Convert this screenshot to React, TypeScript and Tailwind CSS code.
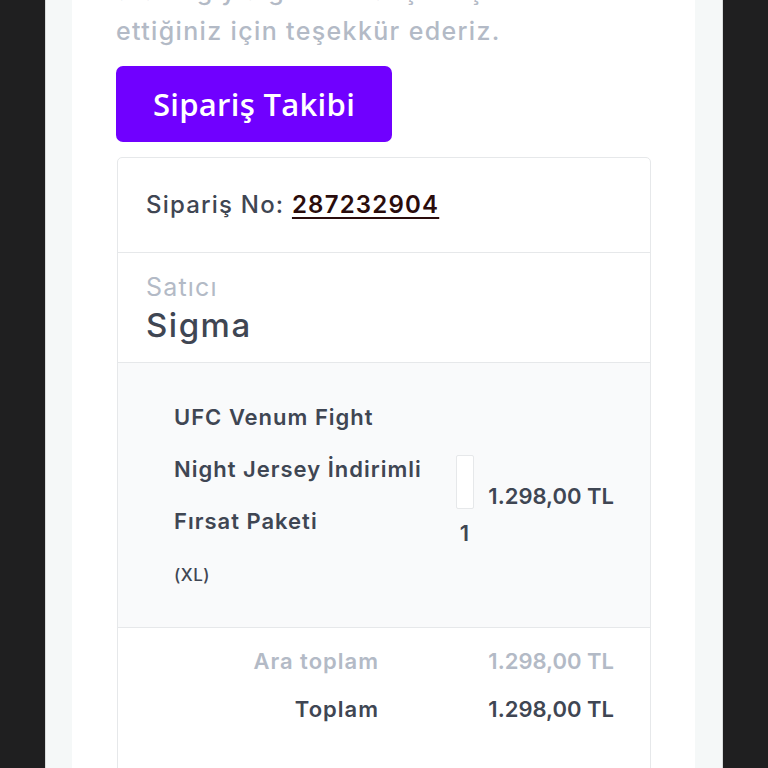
export default function App() {
  return (
    <div className="min-h-[768px] w-full overflow-hidden bg-[#1f1f20] font-['Inter',sans-serif]">
      <div className="mx-auto min-h-[768px] w-[678px] border-x border-[#d9dcdc] bg-[#f5f8f8]">
        <div className="ml-[26px] min-h-[768px] w-[623px] bg-white px-[44px]">
          <p className="-mt-[29px] text-[25px] font-medium leading-[40px] tracking-[1.35px] text-[#b3bac6]">
            aracılığıyla güvenli alışveriş tercih
            <br />
            ettiğiniz için teşekkür ederiz.
          </p>

          <button className="mt-[15px] flex h-[76px] w-[276px] items-center justify-center rounded-[7px] bg-[#7000ff] font-['Open_Sans',sans-serif] text-[31px] font-semibold tracking-[0.3px] text-white">
            Sipariş Takibi
          </button>

          <div className="ml-[1px] mt-[15px] rounded-t-[5px] border border-[#e6e8ea] text-[#3f4653]">
            <div className="flex h-[95px] items-center border-b border-[#e6e8ea] px-[28px] text-[24px] font-medium tracking-[1.2px]">
              <span>Sipariş No:&nbsp;</span>
              <span className="font-semibold text-[#2a0c0c] underline underline-offset-[4px]">287232904</span>
            </div>

            <div className="border-b border-[#e6e8ea] px-[28px] pb-[15px] pt-[19px]">
              <div className="text-[25px] leading-[30px] tracking-[1.2px] text-[#b3bac6]">Satıcı</div>
              <div className="mt-[1px] text-[33px] font-medium leading-[44px] tracking-[1.5px]">Sigma</div>
            </div>

            <div className="flex items-center border-b border-[#e6e8ea] bg-[#f9fafb] pb-[26px] pl-[56px] pr-[36px] pt-[28px]">
              <div className="w-[274px] text-[22px] font-semibold leading-[52px] tracking-[1px]">
                UFC Venum Fight
                <br />
                Night Jersey İndirimli
                <br />
                Fırsat Paketi
                <br />
                <span className="text-[17px] font-medium tracking-[0.5px]">(XL)</span>
              </div>
              <div className="flex w-[33px] flex-col items-center pt-[7px]">
                <div className="h-[54px] w-[18px] rounded-[2px] border border-[#e6e8ea] bg-white" />
                <div className="mt-[12px] text-[22px] font-semibold leading-[24px]">1</div>
              </div>
              <div className="ml-auto text-[22px] font-semibold">1.298,00 TL</div>
            </div>

            <div className="pt-[17px] text-[22px] font-semibold">
              <div className="flex h-[32px] items-center text-[#b3bac6]">
                <div className="w-[261px] text-right tracking-[1px]">Ara toplam</div>
                <div className="ml-auto pr-[36px]">1.298,00 TL</div>
              </div>
              <div className="mt-[16px] flex h-[32px] items-center">
                <div className="w-[261px] text-right tracking-[1px]">Toplam</div>
                <div className="ml-auto pr-[36px]">1.298,00 TL</div>
              </div>
              <div className="h-[60px]" />
            </div>
          </div>
        </div>
      </div>
    </div>
  );
}
